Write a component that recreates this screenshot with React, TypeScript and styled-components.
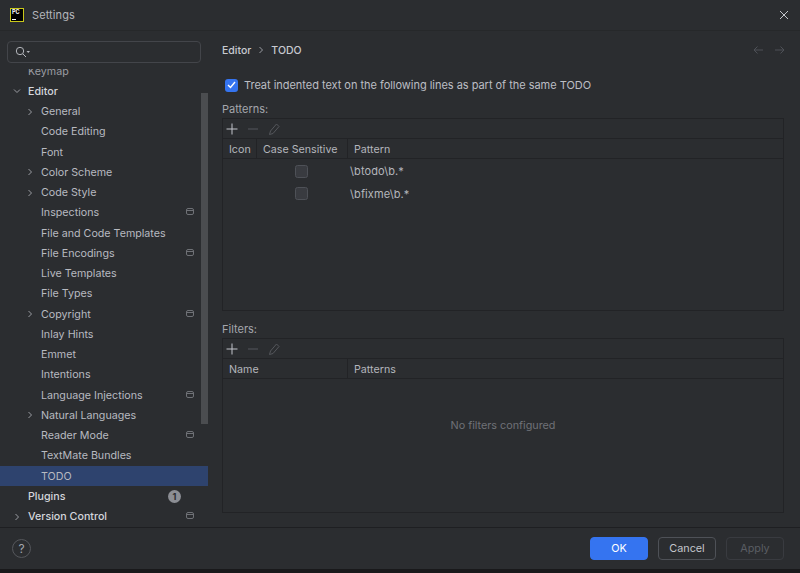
import React from "react";
import styled, {createGlobalStyle} from "styled-components";

const GlobalStyle = createGlobalStyle`
  html, body {
    margin: 0;
    padding: 0;
    background: #19191b;
  }
  body {
    font-family: Inter, "Liberation Sans", sans-serif;
    font-size: 11px;
    color: #c4c6cc;
  }
`;

interface NavItem {
  label: string;
  level: 0 | 1;
  arrow?: "right" | "down";
  project?: boolean;
  selected?: boolean;
  badge?: string;
  dim?: boolean;
}

const navItems: NavItem[] = [
  {label: "Keymap", level: 0, dim: true},
  {label: "Editor", level: 0, arrow: "down"},
  {label: "General", level: 1, arrow: "right"},
  {label: "Code Editing", level: 1},
  {label: "Font", level: 1},
  {label: "Color Scheme", level: 1, arrow: "right"},
  {label: "Code Style", level: 1, arrow: "right"},
  {label: "Inspections", level: 1, project: true},
  {label: "File and Code Templates", level: 1},
  {label: "File Encodings", level: 1, project: true},
  {label: "Live Templates", level: 1},
  {label: "File Types", level: 1},
  {label: "Copyright", level: 1, arrow: "right", project: true},
  {label: "Inlay Hints", level: 1},
  {label: "Emmet", level: 1},
  {label: "Intentions", level: 1},
  {label: "Language Injections", level: 1, project: true},
  {label: "Natural Languages", level: 1, arrow: "right"},
  {label: "Reader Mode", level: 1, project: true},
  {label: "TextMate Bundles", level: 1},
  {label: "TODO", level: 1, selected: true},
  {label: "Plugins", level: 0, badge: "1"},
  {label: "Version Control", level: 0, arrow: "right", project: true},
];

const Window = styled.div`
  width: 800px;
  height: 569px;
  background: #2b2d30;
  display: flex;
  flex-direction: column;
  overflow: hidden;
`;

const TitleBar = styled.div`
  height: 30px;
  flex: none;
  display: flex;
  align-items: center;
  padding: 0 11px 0 10px;
  gap: 8px;
  border-bottom: 1px solid #26282a;
`;

const Logo = styled.div`
  width: 14px;
  height: 14px;
  box-sizing: border-box;
  background: #000;
  border: 1.5px solid #c9c71a;
  color: #fff;
  font-size: 5.5px;
  line-height: 6px;
  font-weight: 700;
  padding-left: 1px;
  position: relative;
  &::after {
    content: "";
    position: absolute;
    left: 1px;
    bottom: 1px;
    width: 4px;
    height: 1px;
    background: #fff;
  }
`;

const WindowTitle = styled.div`
  flex: 1;
  font-size: 11px;
  color: #b4b6bc;
  letter-spacing: 0.1px;
`;

const IconButton = styled.div`
  display: flex;
  align-items: center;
  justify-content: center;
`;

const Body = styled.div`
  flex: 1;
  display: flex;
  min-height: 0;
`;

const Sidebar = styled.div`
  width: 208px;
  flex: none;
  display: flex;
  flex-direction: column;
  position: relative;
`;

const SearchBox = styled.div`
  height: 22px;
  flex: none;
  box-sizing: border-box;
  margin: 10px 7px 6px 7px;
  border: 1px solid #43454a;
  border-radius: 4px;
  display: flex;
  align-items: center;
  padding-left: 7px;
`;

const NavClip = styled.div`
  flex: 1;
  overflow: hidden;
  min-height: 0;
`;

const NavList = styled.div`
  margin-top: -8px;
`;

const Row = styled.div<{$selected?: boolean; $level: number}>`
  height: 20.25px;
  display: flex;
  align-items: center;
  position: relative;
  box-sizing: border-box;
  padding-left: ${p => (p.$level === 0 ? 28 : 41)}px;
  padding-right: 14px;
  background: ${p => (p.$selected ? "#2e436e" : "transparent")};
`;

const RowLabel = styled.span<{$level: number; $dim?: boolean}>`
  flex: 1;
  font-size: 10.7px;
  color: ${p => (p.$dim ? "#9a9ca2" : p.$level === 0 ? "#d4d6dc" : "#b8bac0")};
  font-weight: ${p => (p.$level === 0 && !p.$dim ? 500 : 400)};
  white-space: nowrap;
`;

const Arrow = styled.span<{$level: number}>`
  position: absolute;
  left: ${p => (p.$level === 0 ? 13 : 26)}px;
  top: 6px;
  width: 8px;
  height: 8px;
  display: flex;
`;

const Badge = styled.span`
  width: 13px;
  height: 13px;
  border-radius: 50%;
  background: #8c8e94;
  color: #2b2d30;
  font-size: 9px;
  font-weight: 700;
  line-height: 13px;
  text-align: center;
  margin-right: 13px;
`;

const ScrollThumb = styled.div`
  position: absolute;
  left: 201px;
  top: 62px;
  width: 7px;
  height: 331px;
  background: #4b4d50;
`;

const Main = styled.div`
  flex: 1;
  min-width: 0;
  box-sizing: border-box;
  padding: 0 16px 0 14px;
  display: flex;
  flex-direction: column;
`;

const BreadcrumbRow = styled.div`
  height: 38px;
  flex: none;
  display: flex;
  align-items: center;
  font-size: 10.5px;
  font-weight: 500;
  color: #c8cad0;
`;

const Crumbs = styled.div`
  flex: 1;
  display: flex;
  align-items: center;
  gap: 7px;
`;

const NavArrows = styled.div`
  display: flex;
  gap: 12px;
  margin-right: -1px;
`;

const OptionRow = styled.div`
  height: 16px;
  margin-top: 8px;
  padding-left: 3px;
  display: flex;
  align-items: center;
  gap: 6px;
  color: #bcbec4;
  letter-spacing: -0.03px;
`;

const CheckedBox = styled.div`
  width: 13px;
  height: 13px;
  border-radius: 3px;
  background: #3574f0;
  display: flex;
  align-items: center;
  justify-content: center;
`;

const SectionLabel = styled.div<{$top: number}>`
  margin-top: ${p => p.$top}px;
  height: 14px;
  line-height: 16px;
  color: #a4a6ac;
`;

const TablePanel = styled.div<{$height: number}>`
  height: ${p => p.$height}px;
  flex: none;
  margin-top: 3px;
  box-sizing: border-box;
  border: 1px solid #222326;
  display: flex;
  flex-direction: column;
`;

const Toolbar = styled.div`
  height: 19px;
  flex: none;
  display: flex;
  align-items: center;
  padding-left: 1px;
  gap: 5px;
  border-bottom: 1px solid #222326;
`;

const ToolSlot = styled.span`
  width: 16px;
  height: 16px;
  display: flex;
  align-items: center;
  justify-content: center;
`;

const HeaderRow = styled.div`
  height: 19px;
  flex: none;
  display: flex;
  margin-bottom: 1px;
  border-bottom: 1px solid #222326;
`;

const HeaderCell = styled.div<{$width?: number}>`
  box-sizing: border-box;
  width: ${p => (p.$width ? `${p.$width}px` : "auto")};
  flex: ${p => (p.$width ? "none" : 1)};
  display: flex;
  align-items: center;
  padding: 1px 0 0 6px;
  font-size: 10.7px;
  color: #b4b6bc;
  border-right: ${p => (p.$width ? "1px solid #222326" : "none")};
`;

const PatternRow = styled.div`
  height: 22.5px;
  display: flex;
  align-items: center;
`;

const CheckCell = styled.div`
  width: 125px;
  flex: none;
  display: flex;
  justify-content: center;
  padding-left: 31px;
  box-sizing: border-box;
`;

const EmptyBox = styled.div`
  width: 11px;
  height: 11px;
  border-radius: 2.5px;
  background: #393b40;
  border: 1px solid #4e5157;
`;

const PatternText = styled.div`
  padding-left: 2px;
  color: #b4b6bc;
  letter-spacing: 0.1px;
`;

const EmptyState = styled.div`
  flex: 1;
  display: flex;
  align-items: center;
  justify-content: center;
  color: #6f7177;
  font-size: 10.8px;
  padding-bottom: 41px;
`;

const Footer = styled.div`
  height: 41px;
  flex: none;
  box-sizing: content-box;
  border-top: 1px solid #1e1f22;
  display: flex;
  align-items: center;
  justify-content: space-between;
  padding: 0 16px 1px 12px;
  margin-bottom: -1px;
`;

const HelpButton = styled.div`
  width: 17px;
  height: 17px;
  border-radius: 50%;
  border: 1px solid #55575c;
  display: flex;
  align-items: center;
  justify-content: center;
  color: #a4a6ac;
  font-size: 12px;
`;

const Buttons = styled.div`
  display: flex;
  gap: 10px;
`;

const Button = styled.div<{$kind?: "primary" | "disabled"}>`
  width: 58px;
  height: 23px;
  box-sizing: border-box;
  border-radius: 4px;
  display: flex;
  align-items: center;
  justify-content: center;
  font-size: 10.8px;
  background: ${p => (p.$kind === "primary" ? "#3574f0" : "transparent")};
  border: 1px solid
    ${p =>
      p.$kind === "primary"
        ? "#3574f0"
        : p.$kind === "disabled"
          ? "#393b40"
          : "#4e5157"};
  color: ${p =>
    p.$kind === "primary"
      ? "#ffffff"
      : p.$kind === "disabled"
        ? "#5a5d63"
        : "#c4c6cc"};
`;

const ProjectGlyph = styled.svg`
  margin-bottom: 2px;
`;

const Chevron = ({down}: {down?: boolean}) => (
  <svg width="8" height="8" viewBox="0 0 8 8" fill="none">
    <path
      d={down ? "M1 2.5L4 5.5L7 2.5" : "M2.5 1L5.5 4L2.5 7"}
      stroke="#9a9ca2"
      strokeWidth="1"
    />
  </svg>
);

const ProjectIcon = () => (
  <ProjectGlyph width="8" height="7" viewBox="0 0 8 7" fill="none">
    <rect x="0.5" y="0.5" width="7" height="6" rx="1.5" stroke="#6f7176" />
    <path d="M1 2.5H7" stroke="#6f7176" />
  </ProjectGlyph>
);

const PlusIcon = () => (
  <svg width="12" height="12" viewBox="0 0 12 12" fill="none">
    <path d="M6 0.5V11.5M0.5 6H11.5" stroke="#c4c6cc" strokeWidth="1" />
  </svg>
);

const MinusIcon = () => (
  <svg width="12" height="12" viewBox="0 0 12 12" fill="none">
    <path d="M1 6H11" stroke="#55575c" strokeWidth="1" />
  </svg>
);

const PencilIcon = () => (
  <svg width="12" height="12" viewBox="0 0 12 12" fill="none">
    <path
      d="M8.5 1L11 3.5L5 10.5L1.5 11.5L2.5 8Z"
      stroke="#55575c"
      strokeWidth="1"
      strokeLinejoin="round"
    />
  </svg>
);

const TableTools = () => (
  <Toolbar>
    <ToolSlot>
      <PlusIcon />
    </ToolSlot>
    <ToolSlot>
      <MinusIcon />
    </ToolSlot>
    <ToolSlot>
      <PencilIcon />
    </ToolSlot>
  </Toolbar>
);

const App = () => {
  return (
    <Window>
      <GlobalStyle />
      <TitleBar>
        <Logo>PC</Logo>
        <WindowTitle>Settings</WindowTitle>
        <IconButton>
          <svg width="10" height="10" viewBox="0 0 10 10" fill="none">
            <path d="M1 1L9 9M9 1L1 9" stroke="#c4c6cc" strokeWidth="1" />
          </svg>
        </IconButton>
      </TitleBar>
      <Body>
        <Sidebar>
          <SearchBox>
            <svg width="16" height="12" viewBox="0 0 16 12" fill="none">
              <circle cx="5" cy="5" r="3.7" stroke="#b4b6bc" />
              <path d="M8 8L11 11" stroke="#b4b6bc" />
              <path d="M11.5 5H15L13.25 7Z" fill="#b4b6bc" />
            </svg>
          </SearchBox>
          <NavClip>
            <NavList>
              {navItems.map(item => (
                <Row key={item.label} $level={item.level} $selected={item.selected}>
                  {item.arrow ? (
                    <Arrow $level={item.level}>
                      <Chevron down={item.arrow === "down"} />
                    </Arrow>
                  ) : null}
                  <RowLabel $level={item.level} $dim={item.dim}>
                    {item.label}
                  </RowLabel>
                  {item.project ? <ProjectIcon /> : null}
                  {item.badge ? <Badge>{item.badge}</Badge> : null}
                </Row>
              ))}
            </NavList>
          </NavClip>
          <ScrollThumb />
        </Sidebar>
        <Main>
          <BreadcrumbRow>
            <Crumbs>
              <span>Editor</span>
              <svg width="6" height="8" viewBox="0 0 6 8" fill="none">
                <path d="M1.5 1L4.5 4L1.5 7" stroke="#9a9ca2" />
              </svg>
              <span>TODO</span>
            </Crumbs>
            <NavArrows>
              <svg width="10" height="10" viewBox="0 0 10 10" fill="none">
                <path d="M10 5H1M4.5 1.5L1 5L4.5 8.5" stroke="#4e5157" />
              </svg>
              <svg width="10" height="10" viewBox="0 0 10 10" fill="none">
                <path d="M0 5H9M5.5 1.5L9 5L5.5 8.5" stroke="#4e5157" />
              </svg>
            </NavArrows>
          </BreadcrumbRow>
          <OptionRow>
            <CheckedBox>
              <svg width="9" height="8" viewBox="0 0 9 8" fill="none">
                <path d="M1 4L3.5 6.5L8 1" stroke="#fff" strokeWidth="1.4" />
              </svg>
            </CheckedBox>
            Treat indented text on the following lines as part of the same TODO
          </OptionRow>
          <SectionLabel $top={8}>Patterns:</SectionLabel>
          <TablePanel $height={193}>
            <TableTools />
            <HeaderRow>
              <HeaderCell $width={34}>Icon</HeaderCell>
              <HeaderCell $width={91}>Case Sensitive</HeaderCell>
              <HeaderCell>Pattern</HeaderCell>
            </HeaderRow>
            <PatternRow>
              <CheckCell>
                <EmptyBox />
              </CheckCell>
              <PatternText>\btodo\b.*</PatternText>
            </PatternRow>
            <PatternRow>
              <CheckCell>
                <EmptyBox />
              </CheckCell>
              <PatternText>\bfixme\b.*</PatternText>
            </PatternRow>
          </TablePanel>
          <SectionLabel $top={10}>Filters:</SectionLabel>
          <TablePanel $height={175}>
            <TableTools />
            <HeaderRow>
              <HeaderCell $width={125}>Name</HeaderCell>
              <HeaderCell>Patterns</HeaderCell>
            </HeaderRow>
            <EmptyState>No filters configured</EmptyState>
          </TablePanel>
        </Main>
      </Body>
      <Footer>
        <HelpButton>?</HelpButton>
        <Buttons>
          <Button $kind="primary">OK</Button>
          <Button>Cancel</Button>
          <Button $kind="disabled">Apply</Button>
        </Buttons>
      </Footer>
    </Window>
  );
};

export default App;
